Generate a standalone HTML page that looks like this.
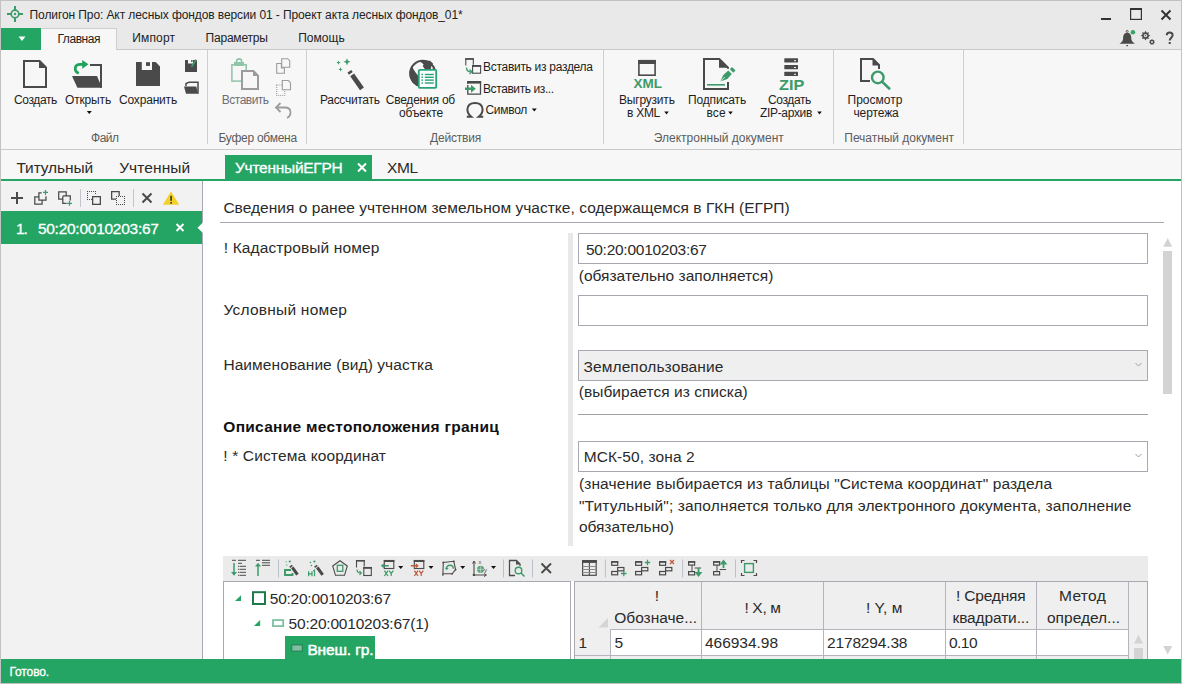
<!DOCTYPE html><html><head><meta charset="utf-8"><style>
html,body{margin:0;padding:0;}
body{width:1182px;height:684px;overflow:hidden;position:relative;background:#fff;font-family:"Liberation Sans", sans-serif;}
.t{position:absolute;white-space:nowrap;line-height:1;font-family:"Liberation Sans", sans-serif;}
</style></head><body><div style="position:absolute;left:0px;top:0px;width:1182px;height:684px;background:#ffffff;"></div>
<div style="position:absolute;left:1px;top:1px;width:1180px;height:48px;background:#e9e9e9;"></div>
<div style="position:absolute;left:1px;top:50px;width:1180px;height:99px;background:#f7f7f7;"></div>
<div style="position:absolute;left:1px;top:49px;width:1180px;height:1px;background:#c9c9c9;"></div>
<div style="position:absolute;left:1px;top:149px;width:1180px;height:1px;background:#c9c9c9;"></div>
<div style="position:absolute;left:1px;top:150px;width:1180px;height:29px;background:#f7f7f7;"></div>
<div style="position:absolute;left:1px;top:179px;width:1180px;height:2px;background:#24a564;"></div>
<div class="t" style="letter-spacing:-0.097px;left:29.60px;top:9.00px;font-size:12px;color:#222;font-weight:normal;">Полигон Про: Акт лесных фондов версии 01 - Проект акта лесных фондов_01*</div>
<div style="position:absolute;left:1px;top:28px;width:40px;height:22px;background:#24a564;"></div>
<div style="position:absolute;left:41px;top:28px;width:76px;height:22px;background:#f7f7f7;box-sizing:border-box;border:1px solid #cfcfcf;border-bottom:none;border-left:none"></div>
<div class="t" style="letter-spacing:-0.455px;left:57.50px;top:33.00px;font-size:12px;color:#222;font-weight:normal;">Главная</div>
<div class="t" style="letter-spacing:0.174px;left:132.20px;top:32.00px;font-size:12px;color:#222;font-weight:normal;">Импорт</div>
<div class="t" style="letter-spacing:-0.219px;left:205.60px;top:32.00px;font-size:12px;color:#222;font-weight:normal;">Параметры</div>
<div class="t" style="letter-spacing:0.040px;left:298.20px;top:32.00px;font-size:12px;color:#222;font-weight:normal;">Помощь</div>
<div style="position:absolute;left:207px;top:50px;width:1px;height:94px;background:#d0d0d0;"></div>
<div style="position:absolute;left:306px;top:50px;width:1px;height:94px;background:#d0d0d0;"></div>
<div style="position:absolute;left:603px;top:50px;width:1px;height:94px;background:#d0d0d0;"></div>
<div style="position:absolute;left:833px;top:50px;width:1px;height:94px;background:#d0d0d0;"></div>
<div style="position:absolute;left:963px;top:50px;width:1px;height:94px;background:#d0d0d0;"></div>
<div class="t" style="letter-spacing:-0.373px;left:14.00px;top:94.00px;font-size:12px;color:#1e1e1e;font-weight:normal;">Создать</div>
<div class="t" style="letter-spacing:-0.163px;left:65.00px;top:94.00px;font-size:12px;color:#1e1e1e;font-weight:normal;">Открыть</div>
<div class="t" style="letter-spacing:-0.182px;left:119.00px;top:94.00px;font-size:12px;color:#1e1e1e;font-weight:normal;">Сохранить</div>
<div class="t" style="letter-spacing:-0.479px;left:91.00px;top:132.00px;font-size:12px;color:#5c5c5c;font-weight:normal;">Файл</div>
<div class="t" style="letter-spacing:-0.509px;left:221.80px;top:94.00px;font-size:12px;color:#6e6e76;font-weight:normal;">Вставить</div>
<div class="t" style="letter-spacing:-0.271px;left:218.50px;top:132.00px;font-size:12px;color:#5c5c5c;font-weight:normal;">Буфер обмена</div>
<div class="t" style="letter-spacing:-0.302px;left:320.00px;top:94.00px;font-size:12px;color:#1e1e1e;font-weight:normal;">Рассчитать</div>
<div class="t" style="letter-spacing:-0.218px;left:385.70px;top:94.00px;font-size:12px;color:#1e1e1e;font-weight:normal;">Сведения об</div>
<div class="t" style="letter-spacing:-0.107px;left:399.00px;top:107.00px;font-size:12px;color:#1e1e1e;font-weight:normal;">объекте</div>
<div class="t" style="letter-spacing:-0.287px;left:483.00px;top:61.00px;font-size:12px;color:#1e1e1e;font-weight:normal;">Вставить из раздела</div>
<div class="t" style="letter-spacing:-0.408px;left:483.00px;top:83.00px;font-size:12px;color:#1e1e1e;font-weight:normal;">Вставить из...</div>
<div class="t" style="letter-spacing:-0.280px;left:485.40px;top:104.00px;font-size:12px;color:#1e1e1e;font-weight:normal;">Символ</div>
<div class="t" style="letter-spacing:-0.197px;left:430.00px;top:132.00px;font-size:12px;color:#5c5c5c;font-weight:normal;">Действия</div>
<div class="t" style="letter-spacing:-0.200px;left:619.00px;top:94.00px;font-size:12px;color:#1e1e1e;font-weight:normal;">Выгрузить</div>
<div class="t" style="letter-spacing:-0.278px;left:627.00px;top:107.00px;font-size:12px;color:#1e1e1e;font-weight:normal;">в XML</div>
<div class="t" style="letter-spacing:-0.156px;left:688.00px;top:94.00px;font-size:12px;color:#1e1e1e;font-weight:normal;">Подписать</div>
<div class="t" style="letter-spacing:0.026px;left:706.60px;top:107.00px;font-size:12px;color:#1e1e1e;font-weight:normal;">все</div>
<div class="t" style="letter-spacing:-0.373px;left:768.00px;top:94.00px;font-size:12px;color:#1e1e1e;font-weight:normal;">Создать</div>
<div class="t" style="letter-spacing:-0.330px;left:760.00px;top:107.00px;font-size:12px;color:#1e1e1e;font-weight:normal;">ZIP-архив</div>
<div class="t" style="letter-spacing:-0.002px;left:653.80px;top:132.00px;font-size:12px;color:#5c5c5c;font-weight:normal;">Электронный документ</div>
<div class="t" style="letter-spacing:0.011px;left:847.50px;top:94.00px;font-size:12px;color:#1e1e1e;font-weight:normal;">Просмотр</div>
<div class="t" style="letter-spacing:-0.091px;left:853.40px;top:107.00px;font-size:12px;color:#1e1e1e;font-weight:normal;">чертежа</div>
<div class="t" style="letter-spacing:-0.037px;left:844.30px;top:132.00px;font-size:12px;color:#5c5c5c;font-weight:normal;">Печатный документ</div>
<div class="t" style="letter-spacing:-0.101px;left:16.40px;top:159.75px;font-size:15.5px;color:#2a2a2a;font-weight:normal;">Титульный</div>
<div class="t" style="letter-spacing:0.089px;left:119.20px;top:159.75px;font-size:15.5px;color:#2a2a2a;font-weight:normal;">Учтенный</div>
<div style="position:absolute;left:225px;top:155px;width:147px;height:24px;background:#24a564;"></div>
<div class="t" style="letter-spacing:-0.263px;left:235.00px;top:159.75px;font-size:15.5px;color:#ffffff;font-weight:normal;-webkit-text-stroke:0.3px #fff">УчтенныйЕГРН</div>
<div class="t" style="letter-spacing:-0.392px;left:387.00px;top:159.75px;font-size:15.5px;color:#2a2a2a;font-weight:normal;">XML</div>
<div style="position:absolute;left:1px;top:181px;width:201px;height:478px;background:#f2f2f2;"></div>
<div style="position:absolute;left:202px;top:181px;width:1px;height:478px;background:#a9a9b3;"></div>
<div style="position:absolute;left:1px;top:211px;width:201px;height:33px;background:#24a564;"></div>
<div class="t" style="letter-spacing:-0.919px;left:15.90px;top:220.75px;font-size:15.5px;color:#ffffff;font-weight:normal;-webkit-text-stroke:0.3px #fff">1.</div>
<div class="t" style="letter-spacing:-0.262px;left:37.90px;top:220.75px;font-size:15.5px;color:#ffffff;font-weight:normal;-webkit-text-stroke:0.3px #fff">50:20:0010203:67</div>
<div style="position:absolute;left:80px;top:189px;width:1px;height:18px;background:#c2c6cc;"></div>
<div style="position:absolute;left:133px;top:189px;width:1px;height:18px;background:#c2c6cc;"></div>
<div class="t" style="letter-spacing:0.028px;left:223.40px;top:199.75px;font-size:15.5px;color:#2a2a2a;font-weight:normal;">Сведения о ранее учтенном земельном участке, содержащемся в ГКН (ЕГРП)</div>
<div style="position:absolute;left:220px;top:222px;width:944px;height:1px;background:#a9a9b1;"></div>
<div style="position:absolute;left:568px;top:233px;width:5px;height:313px;background:#e8e8e8;"></div>
<div class="t" style="letter-spacing:0.119px;left:223.80px;top:239.75px;font-size:15.5px;color:#2a2a2a;font-weight:normal;">! Кадастровый номер</div>
<div style="position:absolute;left:578px;top:233px;width:570px;height:31px;background:#fff;box-sizing:border-box;border:1px solid #a9a9b1"></div>
<div class="t" style="letter-spacing:-0.262px;left:585.90px;top:241.75px;font-size:15.5px;color:#2a2a2a;font-weight:normal;">50:20:0010203:67</div>
<div class="t" style="letter-spacing:0.001px;left:578.80px;top:267.75px;font-size:15.5px;color:#2a2a2a;font-weight:normal;">(обязательно заполняется)</div>
<div class="t" style="letter-spacing:0.238px;left:223.40px;top:301.75px;font-size:15.5px;color:#2a2a2a;font-weight:normal;">Условный номер</div>
<div style="position:absolute;left:578px;top:295px;width:570px;height:31px;background:#fff;box-sizing:border-box;border:1px solid #a9a9b1"></div>
<div class="t" style="letter-spacing:0.082px;left:223.40px;top:356.75px;font-size:15.5px;color:#2a2a2a;font-weight:normal;">Наименование (вид) участка</div>
<div style="position:absolute;left:578px;top:350px;width:570px;height:31px;background:#efefef;box-sizing:border-box;border:1px solid #a9a9b1"></div>
<div class="t" style="letter-spacing:0.114px;left:583.50px;top:358.75px;font-size:15.5px;color:#2a2a2a;font-weight:normal;">Землепользование</div>
<div class="t" style="letter-spacing:0.031px;left:578.80px;top:383.75px;font-size:15.5px;color:#2a2a2a;font-weight:normal;">(выбирается из списка)</div>
<div style="position:absolute;left:578px;top:414px;width:570px;height:1px;background:#a0a0a0;"></div>
<div class="t" style="letter-spacing:0.276px;left:223.30px;top:418.75px;font-size:15.5px;color:#111;font-weight:bold;">Описание местоположения границ</div>
<div class="t" style="letter-spacing:0.143px;left:223.30px;top:447.75px;font-size:15.5px;color:#2a2a2a;font-weight:normal;">! * Система координат</div>
<div style="position:absolute;left:578px;top:441px;width:570px;height:31px;background:#fff;box-sizing:border-box;border:1px solid #a9a9b1"></div>
<div class="t" style="letter-spacing:0.085px;left:583.70px;top:448.75px;font-size:15.5px;color:#2a2a2a;font-weight:normal;">МСК-50, зона 2</div>
<div class="t" style="letter-spacing:0.120px;left:578.90px;top:475.75px;font-size:15.5px;color:#2a2a2a;font-weight:normal;">(значение выбирается из таблицы "Система координат" раздела</div>
<div class="t" style="letter-spacing:0.132px;left:578.90px;top:497.75px;font-size:15.5px;color:#2a2a2a;font-weight:normal;">"Титульный"; заполняется только для электронного документа, заполнение</div>
<div class="t" style="letter-spacing:-0.036px;left:578.90px;top:518.75px;font-size:15.5px;color:#2a2a2a;font-weight:normal;">обязательно)</div>
<div style="position:absolute;left:1163px;top:251px;width:9px;height:143px;background:#d3d3d3;"></div>
<div style="position:absolute;left:223px;top:556px;width:925px;height:25px;background:#ebebeb;"></div>
<div style="position:absolute;left:223px;top:581px;width:348px;height:78px;background:#fff;box-sizing:border-box;border:1px solid #a9a9b1;border-bottom:none"></div>
<div style="position:absolute;left:574px;top:581px;width:574px;height:78px;background:#efefef;box-sizing:border-box;border:1px solid #a9a9b1;border-bottom:none"></div>
<div class="t" style="letter-spacing:-0.249px;left:269.80px;top:590.75px;font-size:15.5px;color:#2a2a2a;font-weight:normal;">50:20:0010203:67</div>
<div class="t" style="letter-spacing:-0.207px;left:288.60px;top:615.75px;font-size:15.5px;color:#2a2a2a;font-weight:normal;">50:20:0010203:67(1)</div>
<div style="position:absolute;left:285px;top:636px;width:90px;height:23px;background:#24a564;"></div>
<div class="t" style="letter-spacing:-0.128px;left:307.40px;top:641.75px;font-size:15.5px;color:#fff;font-weight:normal;-webkit-text-stroke:0.5px #fff">Внеш. гр.</div>
<div style="position:absolute;left:611px;top:630px;width:517px;height:25px;background:#fff;"></div>
<div style="position:absolute;left:701px;top:582px;width:1px;height:77px;background:#b4b4bc;"></div>
<div style="position:absolute;left:823px;top:582px;width:1px;height:77px;background:#b4b4bc;"></div>
<div style="position:absolute;left:945px;top:582px;width:1px;height:77px;background:#b4b4bc;"></div>
<div style="position:absolute;left:1036px;top:582px;width:1px;height:77px;background:#b4b4bc;"></div>
<div style="position:absolute;left:1128px;top:582px;width:1px;height:77px;background:#b4b4bc;"></div>
<div style="position:absolute;left:610px;top:629px;width:1px;height:30px;background:#b4b4bc;"></div>
<div style="position:absolute;left:610px;top:629px;width:518px;height:1px;background:#b4b4bc;"></div>
<div style="position:absolute;left:575px;top:655px;width:553px;height:1px;background:#b4b4bc;"></div>
<div class="t" style="left:654.80px;top:587.75px;font-size:15.5px;color:#2a2a2a;font-weight:normal;">!</div>
<div class="t" style="letter-spacing:0.004px;left:614.20px;top:609.75px;font-size:15.5px;color:#2a2a2a;font-weight:normal;">Обозначе...</div>
<div class="t" style="letter-spacing:-0.322px;left:744.40px;top:599.75px;font-size:15.5px;color:#2a2a2a;font-weight:normal;">! X, м</div>
<div class="t" style="letter-spacing:0.091px;left:866.10px;top:599.75px;font-size:15.5px;color:#2a2a2a;font-weight:normal;">! Y, м</div>
<div class="t" style="letter-spacing:-0.179px;left:956.00px;top:587.75px;font-size:15.5px;color:#2a2a2a;font-weight:normal;">! Средняя</div>
<div class="t" style="letter-spacing:-0.127px;left:952.50px;top:609.75px;font-size:15.5px;color:#2a2a2a;font-weight:normal;">квадрати...</div>
<div class="t" style="letter-spacing:0.309px;left:1059.00px;top:587.75px;font-size:15.5px;color:#2a2a2a;font-weight:normal;">Метод</div>
<div class="t" style="letter-spacing:-0.003px;left:1047.00px;top:609.75px;font-size:15.5px;color:#2a2a2a;font-weight:normal;">определ...</div>
<div class="t" style="left:578.60px;top:634.75px;font-size:15.5px;color:#2a2a2a;font-weight:normal;">1</div>
<div class="t" style="left:614.40px;top:634.75px;font-size:15.5px;color:#2a2a2a;font-weight:normal;">5</div>
<div class="t" style="letter-spacing:-0.031px;left:705.00px;top:634.75px;font-size:15.5px;color:#2a2a2a;font-weight:normal;">466934.98</div>
<div class="t" style="letter-spacing:-0.159px;left:827.00px;top:634.75px;font-size:15.5px;color:#2a2a2a;font-weight:normal;">2178294.38</div>
<div class="t" style="letter-spacing:-0.543px;left:949.00px;top:634.75px;font-size:15.5px;color:#2a2a2a;font-weight:normal;">0.10</div>
<div style="position:absolute;left:1px;top:659px;width:1180px;height:24px;background:#24a564;"></div>
<div class="t" style="letter-spacing:-0.127px;left:9.50px;top:666.00px;font-size:12px;color:#fff;font-weight:normal;-webkit-text-stroke:0.3px #fff">Готово.</div>
<div style="position:absolute;left:0px;top:0px;width:1182px;height:684px;background:none;box-sizing:border-box;border:1px solid #c2c2c2"></div>
<svg style="position:absolute;left:0;top:0" width="1182" height="684" viewBox="0 0 1182 684"><g stroke="#3d9a6a" fill="none"><circle cx="15" cy="14" r="3.8" stroke-width="1.7"/><path d="M15 6v4.2M15 17.8V22M7 14h4.2M18.8 14H23" stroke-width="2"/></g><circle cx="15" cy="14" r="1.2" fill="#3d9a6a"/><path d="M18.5 36.5h7l-3.5 4.5z" fill="#fff"/><rect x="1101" y="18" width="10" height="2" fill="#333"/><rect x="1130.6" y="8.6" width="10.8" height="10.8" fill="none" stroke="#333" stroke-width="1.2"/><rect x="1130" y="8" width="12" height="2" fill="#333"/><path d="M1161.5 10.5l9 9M1170.5 10.5l-9 9" stroke="#333" stroke-width="2"/><path d="M1127.2 32.8C1124 32.8 1123.1 35.5 1123.1 38.5C1123.1 41 1121.5 42.3 1119.5 43.7H1135C1133 42.3 1131.3 41 1131.3 38.5C1131.3 35.5 1130.4 32.8 1127.2 32.8Z" fill="#4a4a4a"/><rect x="1126.4" y="45" width="1.6" height="1.2" fill="#4a4a4a"/><circle cx="1127.2" cy="31.3" r="1" fill="none" stroke="#4a4a4a" stroke-width="0.8"/><circle cx="1132.9" cy="32.3" r="2.3" fill="#3aa36a"/><polygon points="1145.50,30.80 1146.69,32.74 1148.89,32.21 1148.36,34.41 1150.30,35.60 1148.36,36.79 1148.89,38.99 1146.69,38.46 1145.50,40.40 1144.31,38.46 1142.11,38.99 1142.64,36.79 1140.70,35.60 1142.64,34.41 1142.11,32.21 1144.31,32.74" fill="#4a4a4a"/><circle cx="1145.5" cy="35.6" r="1.7" fill="#e9e9e9"/><circle cx="1145.5" cy="35.6" r="0.68" fill="#4a4a4a"/><polygon points="1152.00,39.00 1152.95,40.02 1154.35,40.13 1154.14,41.51 1154.92,42.67 1153.72,43.37 1153.30,44.70 1152.00,44.20 1150.70,44.70 1150.28,43.37 1149.08,42.67 1149.86,41.51 1149.65,40.13 1151.05,40.02" fill="#4a4a4a"/><circle cx="1152" cy="42" r="1.1" fill="#e9e9e9"/><circle cx="1152" cy="42" r="0.44" fill="#4a4a4a"/><path d="M1166.8 35.3C1166.8 33.4 1168.2 32.6 1169.6 32.6C1171.3 32.6 1172.6 33.6 1172.6 35.2C1172.6 37.6 1169.7 37.8 1169.7 40.6" fill="none" stroke="#4a4a4a" stroke-width="2"/><rect x="1168.7" y="42" width="2" height="2" fill="#4a4a4a"/><path d="M24 61h15.6l6.4 6.4V87H24z" fill="none" stroke="#4a4a4a" stroke-width="2"/><path d="M39 61v7h7z" fill="#4a4a4a"/><path d="M90 65h11v22.7" fill="none" stroke="#4a4a4a" stroke-width="2"/><path d="M72 76h25l5 11.8H77.4z" fill="#4a4a4a"/><path d="M78.8 73.2c-5-1.8-5-8.8 1.6-8.8h4.2" fill="none" stroke="#1fa35c" stroke-width="2.8"/><path d="M82.2 60l6.3 4.3-6.3 4.5z" fill="#1fa35c"/><path d="M136 62h5.8v8h10.2v-8h3.7l4.3 4.6V86H136z" fill="#4a4a4a"/><rect x="146" y="62.2" width="4" height="3.7" fill="#4a4a4a"/><path d="M185 60h3v3.6h5v-3.6h4v12h-12z" fill="#4a4a4a"/><rect x="191" y="60.2" width="1.6" height="1.6" fill="#4a4a4a"/><path d="M191.5 66.7l4.6-7" stroke="#3d9a6a" stroke-width="1.8"/><path d="M186 86v-2.5l3-1.3h9v11.6" fill="none" stroke="#4a4a4a" stroke-width="1.5"/><path d="M184 86.5h12.3l1.7 7.3h-12z" fill="#4a4a4a"/><rect x="231.9" y="64.7" width="14.3" height="16.4" fill="none" stroke="#90c4a8" stroke-width="1.5"/><rect x="234" y="62" width="10" height="4" fill="#90c4a8"/><circle cx="239.1" cy="61.5" r="2.6" fill="none" stroke="#90c4a8" stroke-width="1.6"/><path d="M242 71h11.5l4.5 4.7V89H242z" fill="#f7f7f7" stroke="#9c9c9c" stroke-width="2"/><path d="M253 71v5h5z" fill="#9c9c9c"/><path d="M281.7 58.7h6l2 2v6.5h-8z" fill="#f7f7f7" stroke="#9c9c9c" stroke-width="1.1"/><path d="M276.7 63.5h4.7v4.5h3v5.2h-7.7z" fill="none" stroke="#9c9c9c" stroke-width="1.1"/><rect x="276.7" y="85" width="8" height="10.5" fill="none" stroke="#9c9c9c" stroke-width="1.1" stroke-dasharray="1 1"/><path d="M282.3 80.5h6l2.2 2.2v7h-8.2z" fill="#f7f7f7" stroke="#9c9c9c" stroke-width="1.1"/><path d="M276.5 107.5h8.5c4 0 5.5 2.5 5.5 5s-1.5 4.5-3.5 5.3" fill="none" stroke="#9c9c9c" stroke-width="1.8"/><path d="M280.5 103l-4.5 4.5 4.5 4.5" fill="none" stroke="#9c9c9c" stroke-width="1.8"/><path d="M347.5 72.6l3.8-2.6 1.4 2.1-3.8 2.6z" fill="#4a4a4a"/><path d="M350.2 76.2l3.9-2.7 9.8 14.1-3.9 2.7z" fill="#4a4a4a"/><path d="M347 58.199999999999996L348.01 60.79L350.6 61.8L348.01 62.81L347 65.39999999999999L345.99 62.81L343.4 61.8L345.99 60.79z" fill="#3d9a6a"/><path d="M338.5 60.4L339.12 61.98L340.7 62.6L339.12 63.22L338.5 64.8L337.88 63.22L336.3 62.6L337.88 61.98z" fill="#3d9a6a"/><path d="M340.5 67.1L341.12 68.68L342.7 69.3L341.12 69.92L340.5 71.5L339.88 69.92L338.3 69.3L339.88 68.68z" fill="#3d9a6a"/><circle cx="422.7" cy="73.3" r="12.5" fill="#f7f7f7" stroke="#4a4a4a" stroke-width="2"/><path d="M420.5 60.5L430 60.8L433 63.5L431.3 66.5L430.5 70.5L425.3 71.2L424.5 68.5L422.8 66.3L423.6 64.3L421.2 62.5z" fill="#4a4a4a"/><path d="M409.6 71.8L412.3 66.8L413.6 69.5L415.6 72.5L417.6 75L419.6 78.5L420.6 82L420.6 86.8L416.5 86L412.3 82.5L409.8 77.5z" fill="#4a4a4a"/><path d="M433.8 66.8L435.8 70.3L431.8 70.3z" fill="#4a4a4a"/><rect x="418.8" y="69.8" width="17.4" height="18" rx="1" fill="#fff" stroke="#27a37a" stroke-width="1.8"/><rect x="421.4" y="73.8" width="1.6" height="1.4" fill="#27a37a"/><rect x="424.8" y="73.8" width="9" height="1.4" fill="#27a37a"/><rect x="421.4" y="76.6" width="1.6" height="1.4" fill="#27a37a"/><rect x="424.8" y="76.6" width="9" height="1.4" fill="#27a37a"/><rect x="421.4" y="79.39999999999999" width="1.6" height="1.4" fill="#27a37a"/><rect x="424.8" y="79.39999999999999" width="9" height="1.4" fill="#27a37a"/><rect x="421.4" y="82.3" width="1.6" height="1.4" fill="#27a37a"/><rect x="424.8" y="82.3" width="9" height="1.4" fill="#27a37a"/><path d="M465.8 65.5v-6.8h7.5v6" fill="none" stroke="#4a4a4a" stroke-width="1.1"/><rect x="465.2" y="58.2" width="8.6" height="1.6" fill="#4a4a4a"/><rect x="472.6" y="65.6" width="8" height="7.6" fill="#f7f7f7" stroke="#4a4a4a" stroke-width="1.1"/><rect x="472.1" y="65.1" width="9" height="1.8" fill="#4a4a4a"/><path d="M466.5 67.5c0 3 1.5 4.3 4.5 4.3" fill="none" stroke="#3d9a6a" stroke-width="1.3"/><path d="M469.5 69.5l2.5 2.3-2.5 2.3" fill="none" stroke="#3d9a6a" stroke-width="1.3"/><path d="M467.8 85v9.2h12.7V81.7h-12.7v2" fill="none" stroke="#4a4a4a" stroke-width="1.3"/><rect x="467.2" y="81" width="13.9" height="2.6" fill="#4a4a4a"/><path d="M465 87.6h6v-2.8l4.8 4-4.8 4v-2.8h-6z" fill="#3d9a6a"/><path d="M466.8 116.8H471.3C468.6 114.6 467.4 112 467.4 109.6C467.4 105.3 470.6 102.9 475 102.9C479.4 102.9 482.6 105.3 482.6 109.6C482.6 112 481.4 114.6 478.7 116.8H483.2" fill="none" stroke="#4a4a4a" stroke-width="2"/><path d="M86.8 111.0h5l-2.5 3z" fill="#111"/><path d="M531.8 108.5h5l-2.5 3z" fill="#111"/><path d="M664.25 111.5h4.5l-2.25 3z" fill="#111"/><path d="M728.25 111.5h4.5l-2.25 3z" fill="#111"/><path d="M817.25 111.5h4.5l-2.25 3z" fill="#111"/><rect x="638.9" y="60.7" width="16.2" height="14.5" fill="none" stroke="#4a4a4a" stroke-width="1.6"/><rect x="638.2" y="60" width="17.6" height="4" fill="#4a4a4a"/><text x="633.6" y="87.8" font-family="Liberation Sans" font-weight="bold" font-size="13.2" fill="#3d9a6a" textLength="28.5" lengthAdjust="spacingAndGlyphs">XML</text><path d="M728 82v7H704V59h15.3l8.7 8.7v1" fill="none" stroke="#4a4a4a" stroke-width="2"/><path d="M719 59v8.7h9z" fill="#4a4a4a"/><rect x="707" y="84" width="18" height="1.6" fill="#3d9a6a"/><path d="M720.3 81.5l3-6.5 5-4.5 3.5 3.5-4.5 5z" fill="#3d9a6a"/><path d="M729.8 69.2l2.2-2.2 3.5 3.5-2.2 2.2z" fill="#3d9a6a"/><path d="M720.3 81.5l4.5-4.5" stroke="#f7f7f7" stroke-width="0.8"/><rect x="784.3" y="58.2" width="13.7" height="4.3" rx="0.5" fill="#4a4a4a"/><rect x="794" y="60.2" width="2" height="1" fill="#f7f7f7"/><rect x="784.3" y="65" width="13.7" height="4.3" rx="0.5" fill="#4a4a4a"/><rect x="794" y="67" width="2" height="1" fill="#f7f7f7"/><rect x="784.3" y="71.8" width="13.7" height="4.3" rx="0.5" fill="#4a4a4a"/><rect x="794" y="73.8" width="2" height="1" fill="#f7f7f7"/><text x="779" y="89.8" font-family="Liberation Sans" font-weight="bold" font-size="14" fill="#3d9a6a" textLength="25.3" lengthAdjust="spacingAndGlyphs">ZIP</text><path d="M870 81H861V59h12l6 6v4" fill="none" stroke="#4a4a4a" stroke-width="2"/><path d="M872.5 59v6.5h7z" fill="#4a4a4a"/><circle cx="877.8" cy="77.4" r="5.8" fill="none" stroke="#3d9a6a" stroke-width="2.4"/><path d="M882 81.6l8 7.6" stroke="#3d9a6a" stroke-width="2.6"/><path d="M358 163.5l8 8M366 163.5l-8 8" stroke="#fff" stroke-width="2"/><path d="M11 198h12M17 192v12" stroke="#4a4a4a" stroke-width="2"/><path d="M41.7 192.8H38.9V200.1H46V196.3M38.9 196.8H34.8V204.1H42.1V200.1" fill="none" stroke="#4a4a4a" stroke-width="1.25"/><path d="M45.5 189.9v5M43 192.4h5" stroke="#3d9a6a" stroke-width="1.2"/><path d="M62.8 199.1H58.7V191.8H66.2V195.8M62.8 196.3V203.3H66.5M62.8 195.8H70.3V200.5" fill="none" stroke="#4a4a4a" stroke-width="1.25"/><path d="M69.5 200.8v5M67 203.3h5" stroke="#3d9a6a" stroke-width="1.2"/><rect x="92.65" y="196.65" width="7.7" height="7.7" fill="none" stroke="#4a4a4a" stroke-width="1.3"/><rect x="87" y="191" width="1" height="1" fill="#4a4a4a"/><rect x="89" y="191" width="1" height="1" fill="#4a4a4a"/><rect x="91" y="191" width="1" height="1" fill="#4a4a4a"/><rect x="93" y="191" width="1" height="1" fill="#4a4a4a"/><rect x="95" y="191" width="1" height="1" fill="#4a4a4a"/><rect x="87" y="193" width="1" height="1" fill="#4a4a4a"/><rect x="95" y="193" width="1" height="1" fill="#4a4a4a"/><rect x="87" y="195" width="1" height="1" fill="#4a4a4a"/><rect x="87" y="197" width="1" height="1" fill="#4a4a4a"/><rect x="87" y="199" width="1" height="1" fill="#4a4a4a"/><rect x="89" y="199" width="1" height="1" fill="#4a4a4a"/><rect x="91" y="199" width="1" height="1" fill="#4a4a4a"/><path d="M116 199.1H111.65V191.65H119.15V196" fill="none" stroke="#4a4a4a" stroke-width="1.3"/><rect x="116" y="196" width="1" height="1" fill="#4a4a4a"/><rect x="118" y="196" width="1" height="1" fill="#4a4a4a"/><rect x="120" y="196" width="1" height="1" fill="#4a4a4a"/><rect x="122" y="196" width="1" height="1" fill="#4a4a4a"/><rect x="124" y="196" width="1" height="1" fill="#4a4a4a"/><rect x="116" y="204" width="1" height="1" fill="#4a4a4a"/><rect x="118" y="204" width="1" height="1" fill="#4a4a4a"/><rect x="120" y="204" width="1" height="1" fill="#4a4a4a"/><rect x="122" y="204" width="1" height="1" fill="#4a4a4a"/><rect x="124" y="204" width="1" height="1" fill="#4a4a4a"/><rect x="116" y="198" width="1" height="1" fill="#4a4a4a"/><rect x="116" y="200" width="1" height="1" fill="#4a4a4a"/><rect x="116" y="202" width="1" height="1" fill="#4a4a4a"/><rect x="124" y="198" width="1" height="1" fill="#4a4a4a"/><rect x="124" y="200" width="1" height="1" fill="#4a4a4a"/><rect x="124" y="202" width="1" height="1" fill="#4a4a4a"/><path d="M142.5 193.5l9 9M151.5 193.5l-9 9" stroke="#4a4a4a" stroke-width="2"/><path d="M171 191.5l8.2 13.2H162.8z" fill="#f5cf2a"/><rect x="170.3" y="195.8" width="1.6" height="5" fill="#333"/><rect x="170.3" y="202" width="1.6" height="1.6" fill="#333"/><path d="M176.5 224l7 7M183.5 224l-7 7" stroke="#fff" stroke-width="1.9"/><path d="M203 222.5v10.5l-5.5-5.25z" fill="#fff"/><path d="M234 563v11" stroke="#3d9a6a" stroke-width="1.5"/><path d="M231 572l3 3.8 3-3.8z" fill="#3d9a6a"/><path d="M232 560.3h4M238 560.3h8M238 563.3h4M239.5 566.3h6.5M239.5 569.3h6.5M239.5 572.3h6.5M239.5 575.3h6.5" stroke="#4a4a4a" stroke-width="1"/><path d="M238 566.3h1M238 569.3h1M238 572.3h1M238 575.3h1" stroke="#4a4a4a" stroke-width="1"/><path d="M258 576v-11" stroke="#3d9a6a" stroke-width="1.5"/><path d="M255 566.5l3-3.8 3 3.8z" fill="#3d9a6a"/><path d="M256 560.3h4M262 560.3h8M262 562.8h8M262 565.3h8" stroke="#4a4a4a" stroke-width="1"/><path d="M291 570H285V575H292.5V573" fill="none" stroke="#3d9a6a" stroke-width="1.9"/><path d="M289.3 566.6l2.6-1.9 0.9 1.3-2.6 1.9z" fill="#4a4a4a"/><path d="M291 568.3l2.5-1.8 5.2 7.2-2.5 1.8z" fill="#4a4a4a"/><circle cx="286.2" cy="561.8" r="0.7" fill="#3d9a6a" opacity="0.7"/><circle cx="289.8" cy="561.5" r="1.1" fill="#3d9a6a"/><circle cx="286.7" cy="565" r="0.8" fill="#3d9a6a" opacity="0.7"/><path d="M308.6 571.3v5M312 571.3v5M308.6 573.8h3.4M313.3 571l1.2-0.9v6.2" fill="none" stroke="#3d9a6a" stroke-width="1.2"/><path d="M314.2 566.6l2.6-1.9 0.9 1.3-2.6 1.9z" fill="#4a4a4a"/><path d="M316 568.3l2.5-1.8 5.4 7.4-2.5 1.8z" fill="#4a4a4a"/><circle cx="310.4" cy="562.5" r="0.8" fill="#3d9a6a"/><circle cx="314.4" cy="561.5" r="1.1" fill="#3d9a6a"/><circle cx="311.4" cy="565.5" r="0.8" fill="#3d9a6a"/><path d="M340 560.7l7.3 5.3-2.8 9.3h-9l-2.8-9.3z" fill="none" stroke="#4a4a4a" stroke-width="1.1"/><rect x="337.3" y="565.3" width="5.5" height="6" fill="none" stroke="#3d9a6a" stroke-width="1.3"/><path d="M356.5 567.5v-7h7.7v6" fill="none" stroke="#4a4a4a" stroke-width="1.1"/><rect x="356" y="560" width="8.7" height="1.6" fill="#4a4a4a"/><rect x="363.8" y="567.5" width="7.5" height="8" fill="#ebebeb" stroke="#4a4a4a" stroke-width="1.1"/><rect x="363.2" y="567" width="8.6" height="1.8" fill="#4a4a4a"/><path d="M357 569.5c0 2.5 1 3.5 3.5 3.5" fill="none" stroke="#3d9a6a" stroke-width="1.2"/><path d="M359.5 571.3l1.8 1.7-1.8 1.7" fill="none" stroke="#3d9a6a" stroke-width="1.2"/><rect x="384.3" y="560.5" width="9.5" height="8" fill="none" stroke="#4a4a4a" stroke-width="1.1"/><rect x="383.8" y="560" width="10.5" height="2" fill="#4a4a4a"/><path d="M388.8 565h-5v-1.8l-3 2.5 3 2.5v-1.8h5z" fill="#3d9a6a"/><path d="M384.40000000000003 570.6l3.6 5.4M388.0 570.6l-3.6 5.4M389.1 570.6l2.1 2.8 2.1-2.8M391.2 573.4v2.6" fill="none" stroke="#3d9a6a" stroke-width="1.2"/><path d="M398.2 566.0h5l-2.5 3z" fill="#111"/><rect x="414.3" y="560.5" width="9.5" height="8" fill="none" stroke="#4a4a4a" stroke-width="1.1"/><rect x="413.8" y="560" width="10.5" height="2" fill="#4a4a4a"/><path d="M410.8 565h5v-1.8l3 2.5-3 2.5v-1.8h-5z" fill="#c0583a"/><path d="M414.40000000000003 570.6l3.6 5.4M418.0 570.6l-3.6 5.4M419.1 570.6l2.1 2.8 2.1-2.8M421.2 573.4v2.6" fill="none" stroke="#c0583a" stroke-width="1.2"/><path d="M428.5 566.0h5l-2.5 3z" fill="#111"/><path d="M443.3 562.5l10.5-1.2 1.8 8.3-3.5 4.2h-9.2z" fill="none" stroke="#4a4a4a" stroke-width="1.1"/><circle cx="443.3" cy="562.5" r="0.9" fill="#4a4a4a"/><circle cx="453.8" cy="561.3" r="0.9" fill="#4a4a4a"/><circle cx="455.6" cy="569.6" r="0.9" fill="#4a4a4a"/><circle cx="452.1" cy="573.8" r="0.9" fill="#4a4a4a"/><circle cx="442.9" cy="574.8" r="0.9" fill="#4a4a4a"/><path d="M446.5 569c0-2.5 1.5-3.8 3.5-3.8s3.3 1.5 3.3 3.5" fill="none" stroke="#3d9a6a" stroke-width="1.4"/><path d="M444.8 567.8l1.8 2.4 2-2.2z" fill="#3d9a6a"/><path d="M460.2 566.0h5l-2.5 3z" fill="#111"/><path d="M474 561.5v13.5h12" fill="none" stroke="#4a4a4a" stroke-width="1.1"/><path d="M472.5 563.5l1.5-2.5 1.5 2.5M484 573.5l2.5 1.5-2.5 1.5" fill="none" stroke="#4a4a4a" stroke-width="1"/><rect x="472.8" y="574" width="2.2" height="2" fill="#4a4a4a"/><circle cx="480.6" cy="569.3" r="3.6" fill="#3d9a6a" opacity="0.85"/><path d="M477 569.3h7.2M480.6 565.7v7.2" stroke="#ebebeb" stroke-width="0.5"/><text x="484" y="572" font-family="Liberation Sans" font-size="6" fill="#4a4a4a">y</text><text x="478.5" y="563.5" font-family="Liberation Sans" font-size="5.5" fill="#4a4a4a">x</text><path d="M491.0 566.0h5l-2.5 3z" fill="#111"/><path d="M515 575.5h-5.5v-15h7l3.5 3.5v2" fill="none" stroke="#4a4a4a" stroke-width="1.3"/><path d="M516 560.5v4h4z" fill="#4a4a4a"/><circle cx="518.5" cy="570.5" r="3.3" fill="none" stroke="#3d9a6a" stroke-width="1.4"/><path d="M521 573l3.5 3.5" stroke="#3d9a6a" stroke-width="1.6"/><path d="M541.5 563.5l9.5 9.5M551 563.5l-9.5 9.5" stroke="#4a4a4a" stroke-width="1.9"/><rect x="278.0" y="559.5" width="1" height="18" fill="#b9c0ca"/><rect x="503.0" y="559.5" width="1" height="18" fill="#b9c0ca"/><rect x="532.0" y="559.5" width="1" height="18" fill="#b9c0ca"/><rect x="604.9" y="559.5" width="1" height="18" fill="#b9c0ca"/><rect x="682.1" y="559.5" width="1" height="18" fill="#b9c0ca"/><rect x="735.0" y="559.5" width="1" height="18" fill="#b9c0ca"/><rect x="582.6" y="560.6" width="13.6" height="14.7" fill="none" stroke="#4a4a4a" stroke-width="1.2"/><rect x="582.1" y="560.1" width="14.6" height="2.8" fill="#4a4a4a"/><path d="M589.4 562v13.5" stroke="#4a4a4a" stroke-width="1.1"/><path d="M582.5 566.5h14M582.5 569.5h14M582.5 572.5h14" stroke="#8a8a8a" stroke-width="1"/><rect x="611.7" y="561.8000000000001" width="6" height="3.5" fill="none" stroke="#4a4a4a" stroke-width="1.2"/><rect x="611.1" y="561.2" width="7.2" height="1.5" fill="#4a4a4a"/><rect x="617.7" y="567.5" width="6.2" height="3.3" fill="none" stroke="#4a4a4a" stroke-width="1.2"/><rect x="611.7" y="571.5" width="6" height="3.3" fill="none" stroke="#4a4a4a" stroke-width="1.2"/><path d="M623.8 570.7v5.6M621 573.5h5.6" stroke="#3d9a6a" stroke-width="1.3"/><rect x="635.6" y="561.8000000000001" width="6" height="3.5" fill="none" stroke="#4a4a4a" stroke-width="1.2"/><rect x="635" y="561.2" width="7.2" height="1.5" fill="#4a4a4a"/><rect x="641.6" y="567.5" width="6.2" height="3.3" fill="none" stroke="#4a4a4a" stroke-width="1.2"/><rect x="635.6" y="571.5" width="6" height="3.3" fill="none" stroke="#4a4a4a" stroke-width="1.2"/><path d="M647.5 559.8v5.4M644.8 562.5h5.4" stroke="#3d9a6a" stroke-width="1.3"/><rect x="659.6" y="561.8000000000001" width="6" height="3.5" fill="none" stroke="#4a4a4a" stroke-width="1.2"/><rect x="659" y="561.2" width="7.2" height="1.5" fill="#4a4a4a"/><rect x="665.6" y="567.5" width="6.2" height="3.3" fill="none" stroke="#4a4a4a" stroke-width="1.2"/><rect x="659.6" y="571.5" width="6" height="3.3" fill="none" stroke="#4a4a4a" stroke-width="1.2"/><path d="M670 560l4 4M674 560l-4 4" stroke="#c0583a" stroke-width="1.3"/><rect x="688.6" y="561.8" width="6" height="3.3" fill="none" stroke="#4a4a4a" stroke-width="1.2"/><rect x="688" y="561.2" width="7.2" height="1.5" fill="#4a4a4a"/><rect x="688.6" y="571.6" width="6" height="3.3" fill="none" stroke="#4a4a4a" stroke-width="1.2"/><path d="M694.6 568h6.5M692 565v6.5" stroke="#4a4a4a" stroke-width="1"/><path d="M698.5 568v5M696.5 573l2 2.5 2-2.5z" stroke="#3d9a6a" stroke-width="1.8" fill="#3d9a6a"/><rect x="713.6" y="561.8" width="6" height="3.3" fill="none" stroke="#4a4a4a" stroke-width="1.2"/><rect x="713" y="561.2" width="7.2" height="1.5" fill="#4a4a4a"/><rect x="713.6" y="571.6" width="6" height="3.3" fill="none" stroke="#4a4a4a" stroke-width="1.2"/><path d="M719.6 569.5h6.5M717 565v6.5" stroke="#4a4a4a" stroke-width="1"/><path d="M723.5 568v-5M721.5 563.5l2-2.5 2 2.5z" stroke="#3d9a6a" stroke-width="1.8" fill="#3d9a6a"/><path d="M741.5 563v-2.5h3M753.5 560.5h3v2.5M756.5 573v2.5h-3M744.5 575.5h-3V573" fill="none" stroke="#4a4a4a" stroke-width="1.2"/><rect x="744.6" y="563.6" width="8.8" height="8.8" fill="none" stroke="#3d9a6a" stroke-width="1.4"/><path d="M235 601h6v-5.8z" fill="#23a464"/><rect x="253" y="592.2" width="12" height="11.8" fill="none" stroke="#1f7a4a" stroke-width="2"/><path d="M254 626h6.1v-6z" fill="#23a464"/><rect x="273" y="620.1" width="10.2" height="6" fill="none" stroke="#7cc0a0" stroke-width="1.8"/><rect x="291.8" y="644.9" width="10.4" height="6.2" fill="#7fbf9f" stroke="#1f7a4a" stroke-width="0.9"/><path d="M598.5 627.5h9.5v-9.5z" fill="#d5d5d5"/><path d="M1134 643.5h9l-4.5-8.5z" fill="#d3d3d3"/><rect x="1134" y="648" width="9" height="11" fill="#d3d3d3"/><path d="M1163.2 246.7h9l-4.5-8.7z" fill="#d3d3d3"/><path d="M1163.2 646h9l-4.5 8.5z" fill="#d3d3d3"/><path d="M1135.5 363l3 3 3-3" fill="none" stroke="#a0a0a8" stroke-width="1"/><path d="M1135.5 454l3 3 3-3" fill="none" stroke="#a0a0a8" stroke-width="1"/></svg></body></html>
